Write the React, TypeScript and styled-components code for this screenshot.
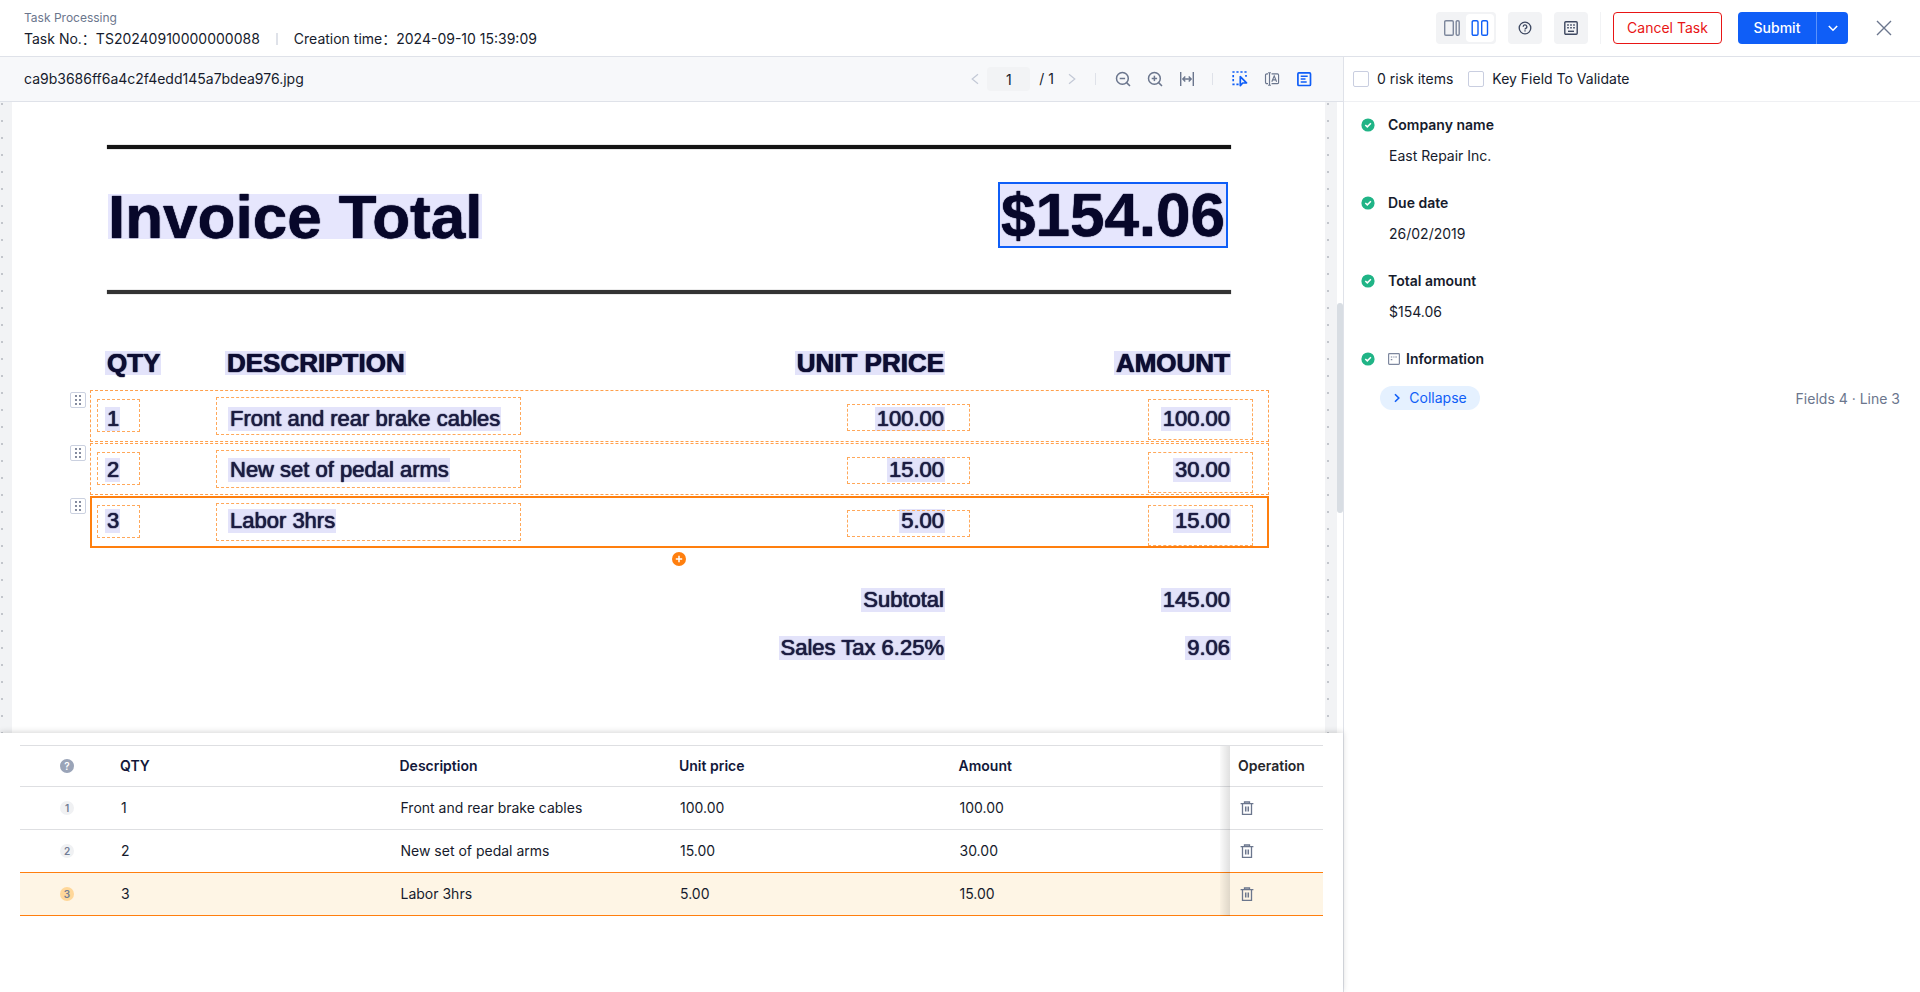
import React from "react";
import styled, { createGlobalStyle, css } from "styled-components";

const c = {
  ink: "#161b2c",
  muted: "#6b768d",
  faint: "#c3c9d6",
  line: "#dfe2e9",
  blue: "#0f5ef7",
  orange: "#ff7f0e",
  red: "#e81515",
  green: "#20b486",
  bar: "#f7f8fa",
  soft: "#f2f3f5",
};

const Global = createGlobalStyle`
  *, *::before, *::after { box-sizing: border-box; }
  body { margin: 0; background: #fff; }
  button, input { font: inherit; color: inherit; }
  button { cursor: pointer; }
`;

const Shell = styled.div`
  display: flex;
  flex-direction: column;
  height: 100vh;
  overflow: hidden;
  color: ${c.ink};
  font: 14px/20px Inter, "Noto Sans CJK SC", sans-serif;
`;

/* ---------- header ---------- */
const Header = styled.header`
  flex: none;
  display: flex;
  align-items: center;
  justify-content: space-between;
  height: 57px;
  padding: 0 24px;
  border-bottom: 1px solid ${c.line};
`;
const TaskInfo = styled.div`
  padding-top: 2px;
`;
const Crumb = styled.div`
  color: ${c.muted};
  font-size: 12px;
  line-height: 20px;
`;
const Meta = styled.div`
  display: flex;
  align-items: center;
  line-height: 22px;
`;
const MetaDivider = styled.span`
  width: 2px;
  height: 12px;
  margin: 0 16px;
  background: ${c.line};
`;
const Actions = styled.div`
  display: flex;
  align-items: center;
`;
const Segmented = styled.div`
  display: flex;
  align-items: center;
  height: 32px;
  padding: 2px;
  border-radius: 4px;
  background: ${c.soft};
`;
const bare = css`
  display: inline-flex;
  align-items: center;
  justify-content: center;
  padding: 0;
  border: 0;
  background: none;
`;
const Segment = styled.button<{ $on?: boolean }>`
  ${bare}
  width: 28px;
  height: 28px;
  border-radius: 4px;
  color: ${(p) => (p.$on ? c.blue : "#7d879c")};
  background: ${(p) => (p.$on ? "#fff" : "transparent")};
`;
const SquareButton = styled.button`
  ${bare}
  width: 34px;
  height: 32px;
  margin-left: 12px;
  border-radius: 4px;
  background: ${c.soft};
  color: #3e4861;
`;
const ActionDivider = styled.span`
  width: 1px;
  height: 32px;
  margin: 0 12px;
  background: ${c.soft};
`;
const CancelButton = styled.button`
  ${bare}
  width: 109px;
  height: 32px;
  border: 1px solid ${c.red};
  border-radius: 4px;
  color: ${c.red};
`;
const SubmitGroup = styled.div`
  display: flex;
  height: 32px;
  margin: 0 24px 0 16px;
  border-radius: 4px;
  overflow: hidden;
  background: ${c.blue};
  color: #fff;
`;
const SubmitButton = styled.button`
  ${bare}
  width: 78px;
  font-weight: 500;
`;
const SubmitMore = styled.button`
  ${bare}
  width: 32px;
  border-left: 1px solid #5b92fa;
`;
const CloseButton = styled.button`
  ${bare}
  width: 24px;
  height: 24px;
  color: ${c.muted};
`;

/* ---------- columns ---------- */
const Body = styled.div`
  flex: 1;
  display: flex;
  min-height: 0;
`;
const Left = styled.main`
  flex: 0 0 70%;
  display: flex;
  flex-direction: column;
  min-width: 0;
  border-right: 1px solid ${c.line};
`;
const Right = styled.aside`
  flex: 1;
  min-width: 0;
`;

/* ---------- document toolbar ---------- */
const Toolbar = styled.div`
  flex: none;
  display: flex;
  align-items: center;
  justify-content: space-between;
  height: 45px;
  padding: 0 31px 0 24px;
  background: ${c.bar};
  border-bottom: 1px solid ${c.line};
`;
const Tools = styled.div`
  display: flex;
  align-items: center;
`;
const Tool = styled.button<{ $on?: boolean }>`
  ${bare}
  width: 16px;
  height: 16px;
  margin-left: 16px;
  color: ${(p) => (p.$on ? c.blue : c.muted)};
`;
const PageArrow = styled.button`
  ${bare}
  width: 12px;
  height: 16px;
  color: ${c.faint};
`;
const PageInput = styled.input`
  width: 43px;
  height: 24px;
  margin: 0 9px 0 6px;
  padding: 0;
  border: 0;
  border-radius: 4px;
  background: ${c.soft};
  text-align: center;
`;
const PageTotal = styled.span`
  margin-right: 12px;
`;
const ToolDivider = styled.span`
  width: 1px;
  height: 12px;
  margin: 0 3px 0 17px;
  background: ${c.line};
`;

/* ---------- document stage ---------- */
const StageWrap = styled.section`
  flex: 1;
  display: flex;
  min-height: 0;
`;
const Stage = styled.div`
  flex: 1;
  min-width: 0;
  padding: 0 12px;
  overflow: hidden;
  background: radial-gradient(circle at 2px 2px, #c3c6cc 1px, transparent 1px) 0 0 / 17px 17px ${c.soft};
`;
const ScrollTrack = styled.div`
  flex: none;
  width: 6px;
  padding-top: 201px;
`;
const ScrollThumb = styled.div`
  height: 210px;
  border-radius: 3px;
  background: #d8dde3;
`;
const inkSpread = css`
  text-shadow: 0 0 1px currentColor, 0 0 1px currentColor;
`;
const Sheet = styled.div`
  position: relative;
  height: 100%;
  padding: 43px 94px 0 95px;
  background: #fff;
  color: #1c1c42;
  font-family: "Liberation Sans", Arial, sans-serif;
`;
const Rule = styled.div<{ $tone: string }>`
  height: 4px;
  background: ${(p) => p.$tone};
  box-shadow: 0 0 1px ${(p) => p.$tone};
`;
const TotalRow = styled.div`
  display: flex;
  align-items: flex-start;
  justify-content: space-between;
  height: 141px;
  padding: 33px 3px 0 1px;
  color: #07072a;
  font-size: 62px;
  font-weight: 700;
`;
const TotalLabel = styled.div`
  margin-top: 12px;
  line-height: 45px;
  background: #e6e6fd;
  white-space: nowrap;
  ${inkSpread}
`;
const TotalValue = styled.div`
  width: 230px;
  line-height: 62px;
  border: 2px solid ${c.blue};
  background: #e6e6fd;
  text-align: center;
  ${inkSpread}
`;
const ScanRow = styled.div<{ $kind?: "head" | "sum" }>`
  display: grid;
  grid-template-columns: ${(p) => (p.$kind === "head" ? 120 : 123)}px 1fr 170px 286px;
  align-items: center;
  height: ${(p) => (p.$kind === "head" ? 60 : p.$kind === "sum" ? 48 : 51)}px;
  font-size: ${(p) => (p.$kind === "head" ? 26 : 22)}px;
  font-weight: ${(p) => (p.$kind === "head" ? 700 : 400)};
  white-space: nowrap;
  ${(p) => p.$kind === "head" && css`color: #0d0d33;`}
`;
const ScanCell = styled.div<{ $end?: boolean }>`
  text-align: ${(p) => (p.$end ? "right" : "left")};
`;
const Word = styled.span`
  display: inline-block;
  margin-left: -2px;
  padding: 0 1px 0 2px;
  line-height: 24px;
  background: #e3e3fa;
  ${inkSpread}
`;
const ScanItems = styled.div`
  padding-top: 39px;
`;
const ScanSums = styled.div`
  padding-top: 30px;
`;

/* Regions marked over the scanned page */
const LineRegion = styled.div<{ $y: number; $on?: boolean }>`
  position: absolute;
  left: 78px;
  right: 56px;
  top: ${(p) => p.$y}px;
  height: 52px;
  border: 1px dashed #ffa04d;
  ${(p) => p.$on && css`
    &::after {
      content: "";
      position: absolute;
      inset: -1px;
      border: 2px solid ${c.orange};
    }
    border-color: transparent;
  `}
`;
const CellRegion = styled.div<{ $l?: number; $r?: number; $t: number; $w: number; $h: number }>`
  position: absolute;
  ${(p) => (p.$l !== undefined ? `left: ${p.$l}px;` : `right: ${p.$r}px;`)}
  top: ${(p) => p.$t}px;
  width: ${(p) => p.$w}px;
  height: ${(p) => p.$h}px;
  border: 1px dashed #ffa85a;
`;
const DragHandle = styled.button`
  ${bare}
  position: absolute;
  left: -21px;
  top: 1px;
  width: 16px;
  height: 16px;
  border: 1px solid #cbd1e0;
  border-radius: 2px;
  background: #fff;
  color: #4b5672;
`;
const AddLine = styled.button`
  ${bare}
  position: absolute;
  left: 50%;
  bottom: -19px;
  width: 14px;
  height: 14px;
  margin-left: -8px;
  border-radius: 50%;
  background: ${c.orange};
  color: #fff;
`;

/* ---------- line table ---------- */
const Panel = styled.section`
  position: relative;
  flex: 0 0 259px;
  padding: 12px 20px;
  background: #fff;
  box-shadow: 0 -1px 6px rgba(0, 0, 0, 0.16);
`;
const Table = styled.table`
  width: 100%;
  table-layout: fixed;
  border-collapse: separate;
  border-spacing: 0;
`;
const Th = styled.th<{ $op?: boolean }>`
  position: relative;
  height: 42px;
  padding: 0 8px;
  border: solid #dedfe2;
  border-width: 1px 0;
  color: ${(p) => (p.$op ? "#26272b" : "#12183a")};
  font-weight: 600;
  text-align: left;
`;
const Td = styled.td`
  position: relative;
  height: 43px;
  padding: 0 9px;
  border-bottom: 1px solid #dedfe2;
`;
const Tr = styled.tr<{ $on?: boolean }>`
  &:has(+ tr[aria-selected="true"]) > td {
    border-color: ${c.orange};
  }
  ${(p) => p.$on && css`
    > td {
      background: #fef5e5;
      border-color: ${c.orange};
    }
  `}
`;
const EdgeShadow = styled.i`
  position: absolute;
  top: 0;
  bottom: -1px;
  left: -10px;
  width: 10px;
  background: linear-gradient(to right, rgba(0, 0, 0, 0.02), rgba(0, 0, 0, 0.12));
`;
const Badge = styled.span<{ $on?: boolean }>`
  display: flex;
  align-items: center;
  justify-content: center;
  width: 14px;
  height: 14px;
  margin-left: 31px;
  border-radius: 50%;
  font-size: 10px;
  font-weight: 600;
  line-height: 14px;
  color: #727d94;
  background: ${(p) => (p.$on ? "#ffd799" : "#f0f1f3")};
`;
const HelpBadge = styled(Badge)`
  margin-left: 32px;
  color: #fff;
  background: #9aa4b8;
`;
const TrashButton = styled.button`
  ${bare}
  display: flex;
  width: 16px;
  height: 16px;
  color: ${c.muted};
`;

/* ---------- right side ---------- */
const Filters = styled.div`
  display: flex;
  align-items: center;
  gap: 15px;
  height: 45px;
  padding: 0 9px;
  border-bottom: 1px solid #eff0f3;
`;
const Check = styled.label`
  display: flex;
  align-items: center;
  gap: 8px;
`;
const CheckInput = styled.input`
  appearance: none;
  width: 16px;
  height: 16px;
  margin: 0;
  border: 1px solid #c9cee0;
  border-radius: 2px;
  background: #fff;
`;
const Fields = styled.dl`
  margin: 0;
  padding: 12px 20px 0 17px;
`;
const FieldName = styled.dt`
  display: flex;
  align-items: center;
  height: 22px;
  font-weight: 600;
  > svg { margin-right: 6px; }
  > svg:first-child { margin-right: 13px; }
`;
const FieldValue = styled.dd`
  margin: 0 0 26px 28px;
  padding-top: 10px;
  line-height: 20px;
`;
const GroupValue = styled.dd`
  display: flex;
  align-items: flex-start;
  justify-content: space-between;
  margin: 0 0 0 19px;
  padding-top: 16px;
`;
const CollapseButton = styled.button`
  ${bare}
  width: 100px;
  height: 24px;
  gap: 8px;
  border-radius: 12px;
  background: #e5f1ff;
  color: ${c.blue};
`;
const Count = styled.span`
  padding-top: 3px;
  color: ${c.muted};
`;

/* ---------- icons ---------- */
type IconProps = { w?: number; h?: number; sw?: number; children: React.ReactNode };
const Icon = ({ w = 16, h = 16, sw = 1.4, children }: IconProps) => (
  <svg width={w} height={h} viewBox={`0 0 ${w} ${h}`} fill="none" stroke="currentColor" strokeWidth={sw} aria-hidden="true">
    {children}
  </svg>
);
const SplitWide = () => (
  <Icon w={18}><rect x="1.7" y=".7" width="8.6" height="14.6" rx="1.2" /><rect x="13.2" y=".7" width="3" height="14.6" rx="1.2" /></Icon>
);
const SplitEven = () => (
  <Icon w={18}><rect x="1.2" y=".7" width="5.8" height="14.6" rx="1.4" /><rect x="10.7" y=".7" width="5.8" height="14.6" rx="1.4" /></Icon>
);
const Help = () => (
  <Icon w={14} h={14} sw={1.3}>
    <circle cx="7" cy="7" r="5.8" />
    <path d="M5.2 5.7a1.8 1.8 0 1 1 2.6 1.6c-.6.3-.8.6-.8 1.2" />
    <path d="M7 9.3v1.2" />
  </Icon>
);
const Keyboard = () => (
  <Icon w={14} h={14}>
    <rect x=".8" y=".8" width="12.4" height="12.4" rx="1" />
    <path d="M3.2 4h1.6M6.2 4h1.6M9.2 4h1.6M3.2 6.8h1.6M6.2 6.8h1.6M9.2 6.8h1.6" />
    <path d="M4 10.3h6" />
  </Icon>
);
const ChevronDown = () => <Icon w={12} h={12} sw={1.6}><path d="M1.8 4l4.2 4.2L10.2 4" /></Icon>;
const Chevron = ({ left }: { left?: boolean }) => (
  <Icon w={8} h={12} sw={1.2}><path d={left ? "M7 1.2L1.2 6 7 10.8" : "M1 1.2L6.8 6 1 10.8"} /></Icon>
);
const SmallChevron = () => <Icon w={8} h={12} sw={1.6}><path d="M2 2.2L5.8 6 2 9.8" /></Icon>;
const Close = () => <Icon><path d="M1 1l14 14M15 1L1 15" /></Icon>;
const Magnifier = ({ plus }: { plus?: boolean }) => (
  <Icon sw={1.5}>
    <circle cx="7.4" cy="7.4" r="5.9" />
    <path d="M11.6 11.6l3.4 3.4M4.7 7.4h5.4" />
    {plus && <path d="M7.4 4.7v5.4" />}
  </Icon>
);
const FitWidth = () => (
  <Icon>
    <path d="M1.7 1v14M14.3 1v14M4 8h8M6.3 5.4L3.8 8l2.5 2.6M9.7 5.4L12.2 8l-2.5 2.6" />
  </Icon>
);
const SelectArea = () => (
  <Icon sw={1.7}>
    <path d="M.4 1h14.4" strokeDasharray="2.2 1.8" />
    <path d="M1.2 4v8M.4 13.4h7" strokeDasharray="2.2 1.8" />
    <path d="M14 4v1.8" />
    <path d="M8.3 5.6v9l2.4-2.6 3.8-.2z" strokeLinejoin="round" />
  </Icon>
);
const Compare = () => (
  <Icon w={18} sw={1.3}>
    <path d="M4.5 2.2H3.2A1.5 1.5 0 0 0 1.7 3.7v8a1.5 1.5 0 0 0 1.5 1.5h1.3" />
    <path d="M4.6 1h3.200M6.200 1v14M4.600 15h3.200" />
    <path d="M8.500 2.200h6.700a1.200 1.200 0 0 1 1.200 1.200v8.600a1.200 1.200 0 0 1-1.200 1.200H8.500" />
    <path d="M8.800 11l2.700-6.500 2.700 6.500M9.700 8.900h3.600" />
  </Icon>
);
const TextBlock = () => (
  <Icon sw={1.7}>
    <rect x="1.9" y="1.9" width="12.6" height="12.6" rx="1" />
    <path d="M4.700 5.200h7M4.700 8h4.800M4.700 10.900h6" strokeWidth="1.5" />
  </Icon>
);
const CheckDot = () => (
  <svg width="14" height="14" viewBox="0 0 14 14" fill="none" aria-hidden="true">
    <circle cx="7" cy="7" r="6.6" fill={c.green} />
    <path d="M4.300 7l2 1.900L9.900 5.300" stroke="#fff" strokeWidth="1.5" />
  </svg>
);
const Group = () => (
  <svg width="12" height="12" viewBox="0 0 12 12" fill="none" stroke="#7d879e" aria-hidden="true">
    <rect x=".6" y=".6" width="10.8" height="10.8" rx=".8" strokeWidth="1.2" />
    <path d="M2.800 4h1.500M5.300 4h1.200M7.300 4h1.600M2.800 6.700h1.500" strokeWidth="1.2" />
  </svg>
);
const Trash = () => (
  <Icon w={14} h={14} sw={1.3}>
    <path d="M.6 2.700h12.800M4.500 2.500V1h5v1.500M2.500 2.700v10.600h9V2.700M5.600 5.500v5M8.400 5.500v5" />
    <path d="M7 5.500v5" strokeWidth=".6" />
  </Icon>
);
const Grip = () => (
  <svg width="8" height="10" viewBox="0 0 8 10" fill="currentColor" aria-hidden="true">
    {[1, 5, 9].map((y) => (
      <React.Fragment key={y}>
        <circle cx="2" cy={y} r=".9" /><circle cx="6" cy={y} r=".9" />
      </React.Fragment>
    ))}
  </svg>
);
const Plus = () => <Icon w={8} h={8} sw={1.5}><path d="M4 .8v6.400M.8 4h6.400" /></Icon>;

/* ---------- data ---------- */
const lines = [
  { qty: "1", description: "Front and rear brake cables", price: "100.00", amount: "100.00" },
  { qty: "2", description: "New set of pedal arms", price: "15.00", amount: "30.00" },
  { qty: "3", description: "Labor 3hrs", price: "5.00", amount: "15.00" },
];
const sums = [
  { label: "Subtotal", value: "145.00" },
  { label: "Sales Tax 6.25%", value: "9.06" },
];
const fields = [
  { name: "Company name", value: "East Repair Inc." },
  { name: "Due date", value: "26/02/2019" },
  { name: "Total amount", value: "$154.06" },
];
const SELECTED = 2;

const TopBar = () => (
  <Header>
    <TaskInfo>
      <Crumb>Task Processing</Crumb>
      <Meta>
        <span>Task No.：TS20240910000000088</span>
        <MetaDivider />
        <span>Creation time：2024-09-10 15:39:09</span>
      </Meta>
    </TaskInfo>
    <Actions>
      <Segmented>
        <Segment aria-label="Side layout"><SplitWide /></Segment>
        <Segment $on aria-label="Even layout"><SplitEven /></Segment>
      </Segmented>
      <SquareButton aria-label="Help"><Help /></SquareButton>
      <SquareButton aria-label="Shortcuts"><Keyboard /></SquareButton>
      <ActionDivider />
      <CancelButton>Cancel Task</CancelButton>
      <SubmitGroup>
        <SubmitButton>Submit</SubmitButton>
        <SubmitMore aria-label="More submit options"><ChevronDown /></SubmitMore>
      </SubmitGroup>
      <CloseButton aria-label="Close"><Close /></CloseButton>
    </Actions>
  </Header>
);

const DocumentToolbar = () => (
  <Toolbar>
    <span>ca9b3686ff6a4c2f4edd145a7bdea976.jpg</span>
    <Tools>
      <PageArrow aria-label="Previous page"><Chevron left /></PageArrow>
      <PageInput aria-label="Page" defaultValue="1" />
      <PageTotal>/ 1</PageTotal>
      <PageArrow aria-label="Next page"><Chevron /></PageArrow>
      <ToolDivider />
      <Tool aria-label="Zoom out"><Magnifier /></Tool>
      <Tool aria-label="Zoom in"><Magnifier plus /></Tool>
      <Tool aria-label="Fit width"><FitWidth /></Tool>
      <ToolDivider />
      <Tool $on aria-label="Select area"><SelectArea /></Tool>
      <Tool aria-label="Compare text"><Compare /></Tool>
      <Tool $on aria-label="Show text"><TextBlock /></Tool>
    </Tools>
  </Toolbar>
);

const Scan = () => (
  <Sheet>
    <Rule $tone="#141414" />
    <TotalRow>
      <TotalLabel>Invoice Total</TotalLabel>
      <TotalValue>$154.06</TotalValue>
    </TotalRow>
    <Rule $tone="#333" />
    <ScanItems>
      <ScanRow $kind="head">
        <ScanCell><Word>QTY</Word></ScanCell>
        <ScanCell><Word>DESCRIPTION</Word></ScanCell>
        <ScanCell $end><Word>UNIT PRICE</Word></ScanCell>
        <ScanCell $end><Word>AMOUNT</Word></ScanCell>
      </ScanRow>
      {lines.map((l) => (
        <ScanRow key={l.qty}>
          <ScanCell><Word>{l.qty}</Word></ScanCell>
          <ScanCell><Word>{l.description}</Word></ScanCell>
          <ScanCell $end><Word>{l.price}</Word></ScanCell>
          <ScanCell $end><Word>{l.amount}</Word></ScanCell>
        </ScanRow>
      ))}
    </ScanItems>
    <ScanSums>
      {sums.map((s) => (
        <ScanRow $kind="sum" key={s.label}>
          <ScanCell />
          <ScanCell />
          <ScanCell $end><Word>{s.label}</Word></ScanCell>
          <ScanCell $end><Word>{s.value}</Word></ScanCell>
        </ScanRow>
      ))}
    </ScanSums>
    {lines.map((l, i) => (
      <LineRegion key={l.qty} $y={288 + i * 53} $on={i === SELECTED}>
        <CellRegion $l={6} $t={8} $w={43} $h={33} />
        <CellRegion $l={125} $t={6} $w={305} $h={38} />
        <CellRegion $r={298} $t={13} $w={123} $h={27} />
        <CellRegion $r={15} $t={8} $w={105} $h={41} />
        <DragHandle aria-label={`Move line ${l.qty}`}><Grip /></DragHandle>
        {i === SELECTED && <AddLine aria-label="Add line"><Plus /></AddLine>}
      </LineRegion>
    ))}
  </Sheet>
);

const LineTable = () => (
  <Panel>
    <Table>
      <colgroup>
        <col width="92" /><col /><col /><col /><col /><col width="93" />
      </colgroup>
      <thead>
        <tr>
          <Th scope="col"><HelpBadge>?</HelpBadge></Th>
          <Th scope="col">QTY</Th>
          <Th scope="col">Description</Th>
          <Th scope="col">Unit price</Th>
          <Th scope="col">Amount</Th>
          <Th scope="col" $op><EdgeShadow />Operation</Th>
        </tr>
      </thead>
      <tbody>
        {lines.map((l, i) => (
          <Tr key={l.qty} $on={i === SELECTED} aria-selected={i === SELECTED}>
            <Td><Badge $on={i === SELECTED}>{i + 1}</Badge></Td>
            <Td>{l.qty}</Td>
            <Td>{l.description}</Td>
            <Td>{l.price}</Td>
            <Td>{l.amount}</Td>
            <Td><EdgeShadow /><TrashButton aria-label={`Delete line ${l.qty}`}><Trash /></TrashButton></Td>
          </Tr>
        ))}
      </tbody>
    </Table>
  </Panel>
);

const FieldPanel = () => (
  <Right>
    <Filters>
      <Check><CheckInput type="checkbox" />0 risk items</Check>
      <Check><CheckInput type="checkbox" />Key Field To Validate</Check>
    </Filters>
    <Fields>
      {fields.map((f) => (
        <React.Fragment key={f.name}>
          <FieldName><CheckDot />{f.name}</FieldName>
          <FieldValue>{f.value}</FieldValue>
        </React.Fragment>
      ))}
      <FieldName><CheckDot /><Group />Information</FieldName>
      <GroupValue>
        <CollapseButton><SmallChevron />Collapse</CollapseButton>
        <Count>Fields 4 · Line 3</Count>
      </GroupValue>
    </Fields>
  </Right>
);

export default function App() {
  return (
    <Shell>
      <Global />
      <TopBar />
      <Body>
        <Left>
          <DocumentToolbar />
          <StageWrap>
            <Stage><Scan /></Stage>
            <ScrollTrack><ScrollThumb /></ScrollTrack>
          </StageWrap>
          <LineTable />
        </Left>
        <FieldPanel />
      </Body>
    </Shell>
  );
}
